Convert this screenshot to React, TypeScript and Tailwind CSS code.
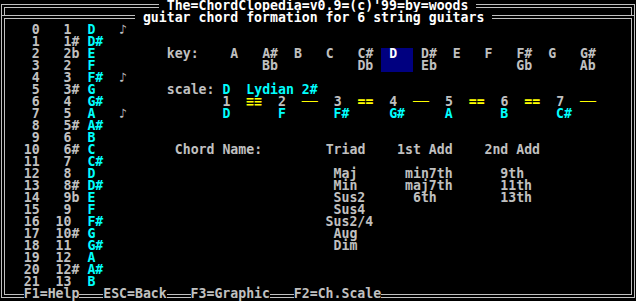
import React from "react";

type Seg = { col: number; text: string; cls?: string };

const GRAY = "text-[#c0c0c0]";
const CYAN = "text-[#00ffff]";
const YELLOW = "text-[#ffff00]";
const HILITE = "bg-[#000080] text-white";
const COVER = "bg-black";

// left column: index, scale step, note, root/third/fifth marker
const STEPS: [string, string, string, boolean][] = [
  ["1", "", "D", true],
  ["1", "#", "D#", false],
  ["2", "b", "E", false],
  ["2", "", "F", false],
  ["3", "", "F#", true],
  ["3", "#", "G", false],
  ["4", "", "G#", false],
  ["5", "", "A", true],
  ["5", "#", "A#", false],
  ["6", "", "B", false],
  ["6", "#", "C", false],
  ["7", "", "C#", false],
  ["8", "", "D", false],
  ["8", "#", "D#", false],
  ["9", "b", "E", false],
  ["9", "", "F", false],
  ["10", "", "F#", false],
  ["10", "#", "G", false],
  ["11", "", "G#", false],
  ["12", "", "A", false],
  ["12", "#", "A#", false],
  ["13", "", "B", false],
];

const KEYS: [string, string][] = [
  ["A", ""], ["A#", "Bb"], ["B", ""], ["C", ""], ["C#", "Db"], ["D", ""],
  ["D#", "Eb"], ["E", ""], ["F", ""], ["F#", "Gb"], ["G", ""], ["G#", "Ab"],
];

const SCALE = ["D", "F", "F#", "G#", "A", "B", "C#"];
const GAPS = ["≡≡", "──", "==", "──", "==", "==", "──"];

const TRIADS: [string, number][] = [
  ["Maj", 42], ["Min", 42], ["Sus2", 42], ["Sus4", 42], ["Sus2/4", 41], ["Aug", 42], ["Dim", 42],
];
const FIRST_ADD: [string, number][] = [["min7th", 51], ["maj7th", 51], ["6th", 52]];
const SECOND_ADD = ["9th", "11th", "13th"];

// rows 2..23 of the text screen, inside the main frame
function bodyRows(): Seg[][] {
  const rows: Seg[][] = Array.from({ length: 22 }, () => []);
  const at = (r: number) => rows[r - 2];

  STEPS.forEach(([deg, acc, note, mark], i) => {
    const row = rows[i];
    row.push(
      { col: 3, text: String(i).padStart(2, " "), cls: GRAY },
      { col: 7, text: deg.padStart(2, " ") + acc, cls: GRAY },
      { col: 11, text: note, cls: CYAN }
    );
    if (mark) row.push({ col: 15, text: "♪", cls: "w-[7.95px] " + GRAY });
  });

  // key selector
  at(4).push({ col: 21, text: "key:", cls: GRAY });
  at(5).push({ col: 48, text: "    ", cls: HILITE });
  KEYS.forEach(([sharp, flat], i) => {
    const col = 29 + i * 4;
    if (sharp === "D") at(4).push({ col: 48, text: " D  ", cls: HILITE });
    else at(4).push({ col, text: sharp, cls: GRAY });
    if (flat) at(5).push({ col, text: flat, cls: GRAY });
  });

  // scale
  at(7).push(
    { col: 21, text: "scale:", cls: GRAY },
    { col: 28, text: "D", cls: CYAN },
    { col: 31, text: "Lydian 2#", cls: CYAN }
  );
  SCALE.forEach((n, i) => {
    const col = 28 + i * 7;
    at(8).push({ col, text: String(i + 1), cls: GRAY }, { col: col + 3, text: GAPS[i], cls: YELLOW });
    at(9).push({ col, text: n, cls: CYAN });
  });

  // chord table
  at(12).push(
    { col: 22, text: "Chord Name:", cls: GRAY },
    { col: 41, text: "Triad", cls: GRAY },
    { col: 50, text: "1st Add", cls: GRAY },
    { col: 61, text: "2nd Add", cls: GRAY }
  );
  TRIADS.forEach(([t, col], i) => at(14 + i).push({ col, text: t, cls: GRAY }));
  FIRST_ADD.forEach(([t, col], i) => at(14 + i).push({ col, text: t, cls: GRAY }));
  SECOND_ADD.forEach((t, i) => at(14 + i).push({ col: 63, text: t, cls: GRAY }));

  return rows;
}

// one 12px text row; columns counted from col 1 (the frame takes col 0)
function Line({ segs, className = "" }: { segs: Seg[]; className?: string }) {
  const sorted = [...segs].sort((a, b) => a.col - b.col);
  const parts: React.ReactNode[] = [];
  let cur = 1;
  sorted.forEach((s, i) => {
    if (s.col > cur)
      parts.push(
        <span key={`gap${i}`} className="inline-block h-3 align-top">
          {" ".repeat(s.col - cur)}
        </span>
      );
    parts.push(
      <span key={i} className={`inline-block h-3 align-top ${s.cls ?? ""}`}>
        {s.text}
      </span>
    );
    cur = s.col + s.text.length;
  });
  return <div className={`flex h-3 leading-[12px] whitespace-pre ${className}`}>{parts}</div>;
}

export default function App() {
  const rows = bodyRows();
  return (
    <div className="w-[636px] h-[301px] bg-black overflow-hidden font-['DejaVu_Sans_Mono',monospace] font-bold text-[13.2px] text-[#c0c0c0]">
      {/* title window */}
      <div className="ml-px w-[634px] mt-1 h-[11px] border-t-4 border-x-4 border-double border-[#c0c0c0]">
        <Line
          className="-mt-2 pl-[2.95px]"
          segs={[{ col: 20, text: " The=ChordClopedia=v0.9=(c)'99=by=woods ", cls: `${COVER} text-white` }]}
        />
      </div>

      {/* main window */}
      <div className="ml-px w-[634px] h-[283px] border-4 border-double border-[#c0c0c0]">
        <div className="pl-[2.95px]">
          <Line
            className="-mt-[7px]"
            segs={[{ col: 17, text: " guitar chord formation for 6 string guitars ", cls: `${COVER} text-white` }]}
          />
          {rows.map((segs, r) => (
            <Line key={r} segs={segs} />
          ))}
          <Line
            segs={[
              { col: 3, text: "F1=Help", cls: COVER },
              { col: 13, text: "ESC=Back", cls: COVER },
              { col: 24, text: "F3=Graphic", cls: COVER },
              { col: 37, text: "F2=Ch.Scale", cls: COVER },
            ]}
          />
        </div>
      </div>
    </div>
  );
}
